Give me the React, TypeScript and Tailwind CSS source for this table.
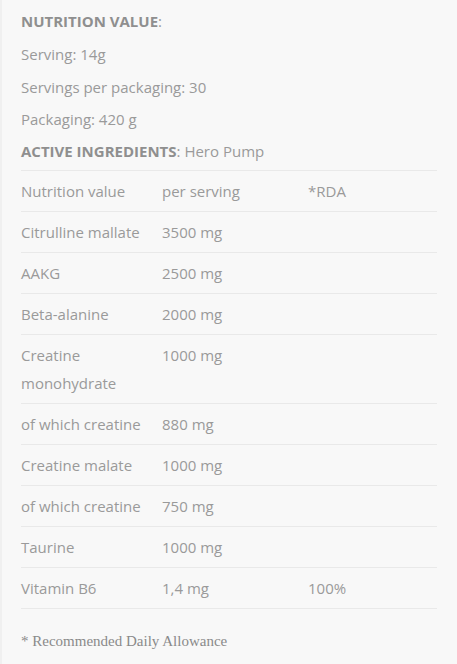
import React from "react";

const rows: [string, string, string][] = [
  ["Nutrition value", "per serving", "*RDA"],
  ["Citrulline mallate", "3500 mg", ""],
  ["AAKG", "2500 mg", ""],
  ["Beta-alanine", "2000 mg", ""],
  ["Creatine monohydrate", "1000 mg", ""],
  ["of which creatine", "880 mg", ""],
  ["Creatine malate", "1000 mg", ""],
  ["of which creatine", "750 mg", ""],
  ["Taurine", "1000 mg", ""],
  ["Vitamin B6", "1,4 mg", "100%"],
];

export default function App() {
  return (
    <div
      className="w-[457px] h-[664px] bg-[#f8f8f8] border-l-2 border-[#f0f0f0] text-[15px] text-[#9a9a9a] overflow-hidden"
      style={{ fontFamily: '"Open Sans", sans-serif' }}
    >
      <div className="pl-[19px] pr-[20px] pt-[5px]">
        <p className="leading-[32px] h-[33px]">
          <span className="font-bold text-[#8f8f8f]">NUTRITION VALUE</span>:
        </p>
        <p className="leading-[32px] h-[33px]">Serving: 14g</p>
        <p className="leading-[32px] h-[32px]">Servings per packaging: 30</p>
        <p className="leading-[32px] h-[32px]">Packaging: 420 g</p>
        <p className="leading-[32px] h-[32px]">
          <span className="font-bold text-[#8f8f8f]">ACTIVE INGREDIENTS</span>: Hero Pump
        </p>
        <div className="mt-[3px] w-[416px] border-t border-[#e9e9e9]">
          {rows.map((r, i) => (
            <div
              key={i}
              className="grid grid-cols-[141px_146px_1fr] border-b border-[#e9e9e9] py-[6px] leading-[28px]"
            >
              <div className="pr-[8px]">{r[0]}</div>
              <div>{r[1]}</div>
              <div>{r[2]}</div>
            </div>
          ))}
        </div>
        <p
          className="mt-[21px] text-[15px] leading-[22px] text-[#8a8a8a]"
          style={{ fontFamily: '"Liberation Serif", serif' }}
        >
          * Recommended Daily Allowance
        </p>
      </div>
    </div>
  );
}
